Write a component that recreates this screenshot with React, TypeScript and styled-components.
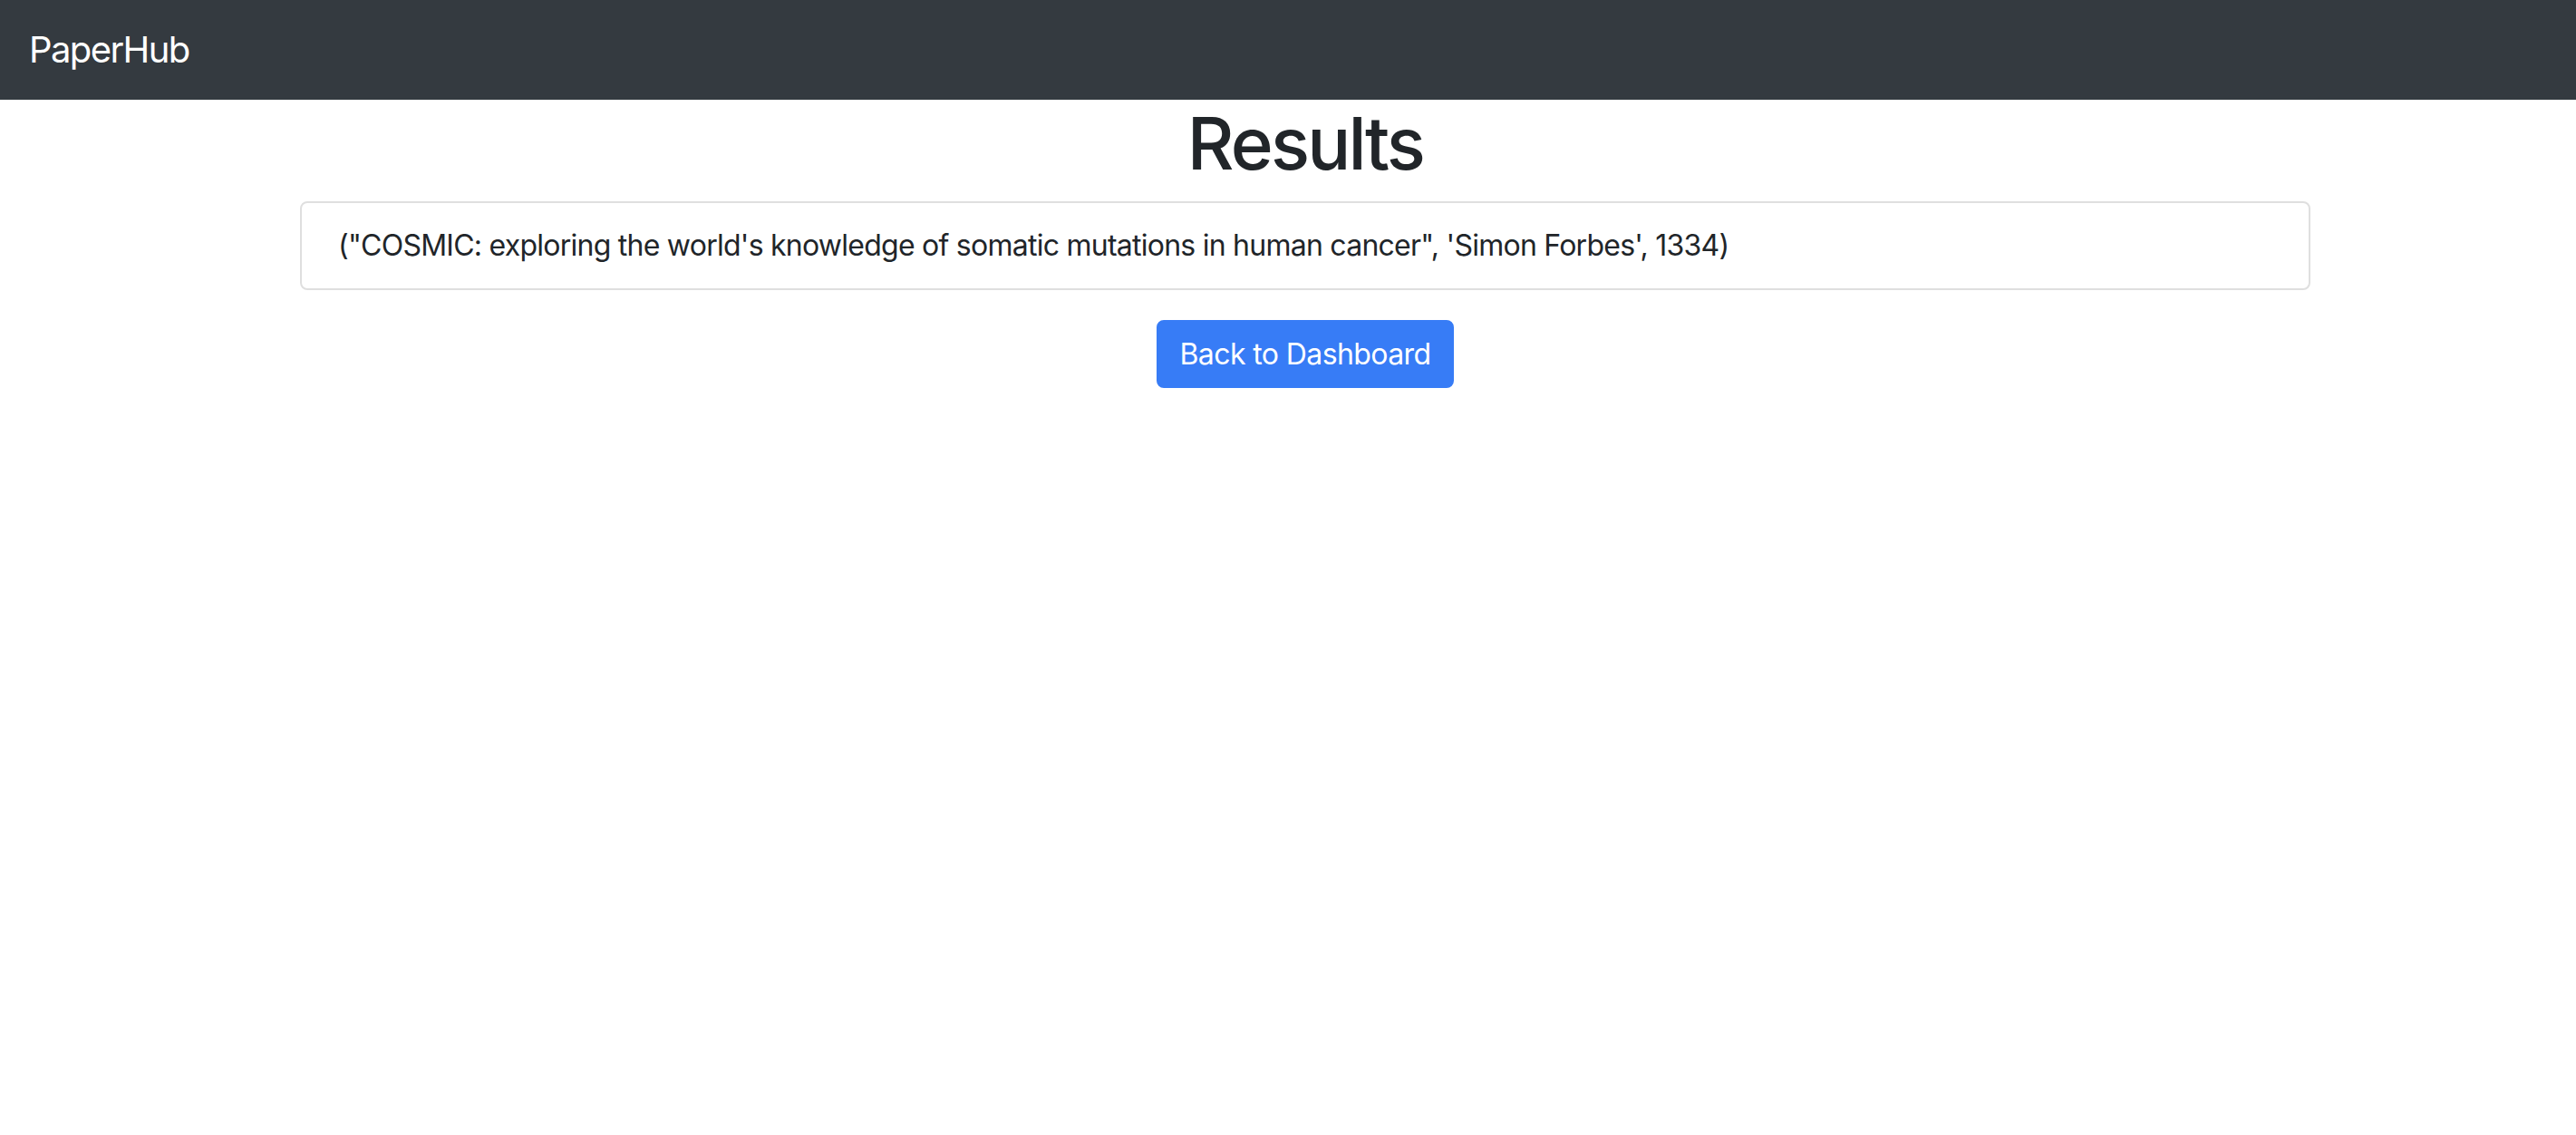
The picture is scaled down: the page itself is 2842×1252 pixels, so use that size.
import React from "react";
import styled, { createGlobalStyle } from "styled-components";

const GlobalStyle = createGlobalStyle`
  html, body {
    margin: 0;
    padding: 0;
    background: #ffffff;
  }
  body {
    font-family: Inter, "Noto Sans", "Liberation Sans", sans-serif;
    font-size: 32px;
    line-height: 1.5;
    color: #212529;
  }
  * { box-sizing: border-box; }
`;

const Navbar = styled.nav`
  display: flex;
  align-items: center;
  height: 110px;
  padding: 0 32px;
  background: #343a40;
`;

const Brand = styled.a`
  color: #ffffff;
  font-size: 40px;
  line-height: 1.5;
  letter-spacing: -1.6px;
  text-decoration: none;
  white-space: nowrap;
`;

const Main = styled.main`
  display: flex;
  flex-direction: column;
  align-items: center;
  padding-left: 38px;
`;

const Title = styled.h1`
  margin: 0 0 16px;
  font-size: 80px;
  font-weight: 500;
  line-height: 1.2;
  letter-spacing: -2.8px;
  color: #212529;
`;

const List = styled.ul`
  width: 2218px;
  margin: 0;
  padding: 0;
  list-style: none;
`;

const Item = styled.li`
  padding: 23px 40px;
  border: 2px solid #dfdfdf;
  border-radius: 8px;
  font-size: 32px;
  line-height: 48px;
  letter-spacing: -0.75px;
  color: #212529;
`;

const Button = styled.button`
  margin-top: 33px;
  padding: 12px 24px;
  border: 2px solid #377cf6;
  border-radius: 8px;
  background: #377cf6;
  color: #ffffff;
  font-family: inherit;
  font-size: 32px;
  line-height: 47px;
  letter-spacing: -0.6px;
  cursor: pointer;
`;

export default function App() {
  const results: [string, string, number][] = [
    ["COSMIC: exploring the world's knowledge of somatic mutations in human cancer", "Simon Forbes", 1334],
  ];
  return (
    <>
      <GlobalStyle />
      <Navbar>
        <Brand href="#">PaperHub</Brand>
      </Navbar>
      <Main>
        <Title>Results</Title>
        <List>
          {results.map(([title, author, n]) => (
            <Item key={title}>{`("${title}", '${author}', ${n})`}</Item>
          ))}
        </List>
        <Button>Back to Dashboard</Button>
      </Main>
    </>
  );
}
